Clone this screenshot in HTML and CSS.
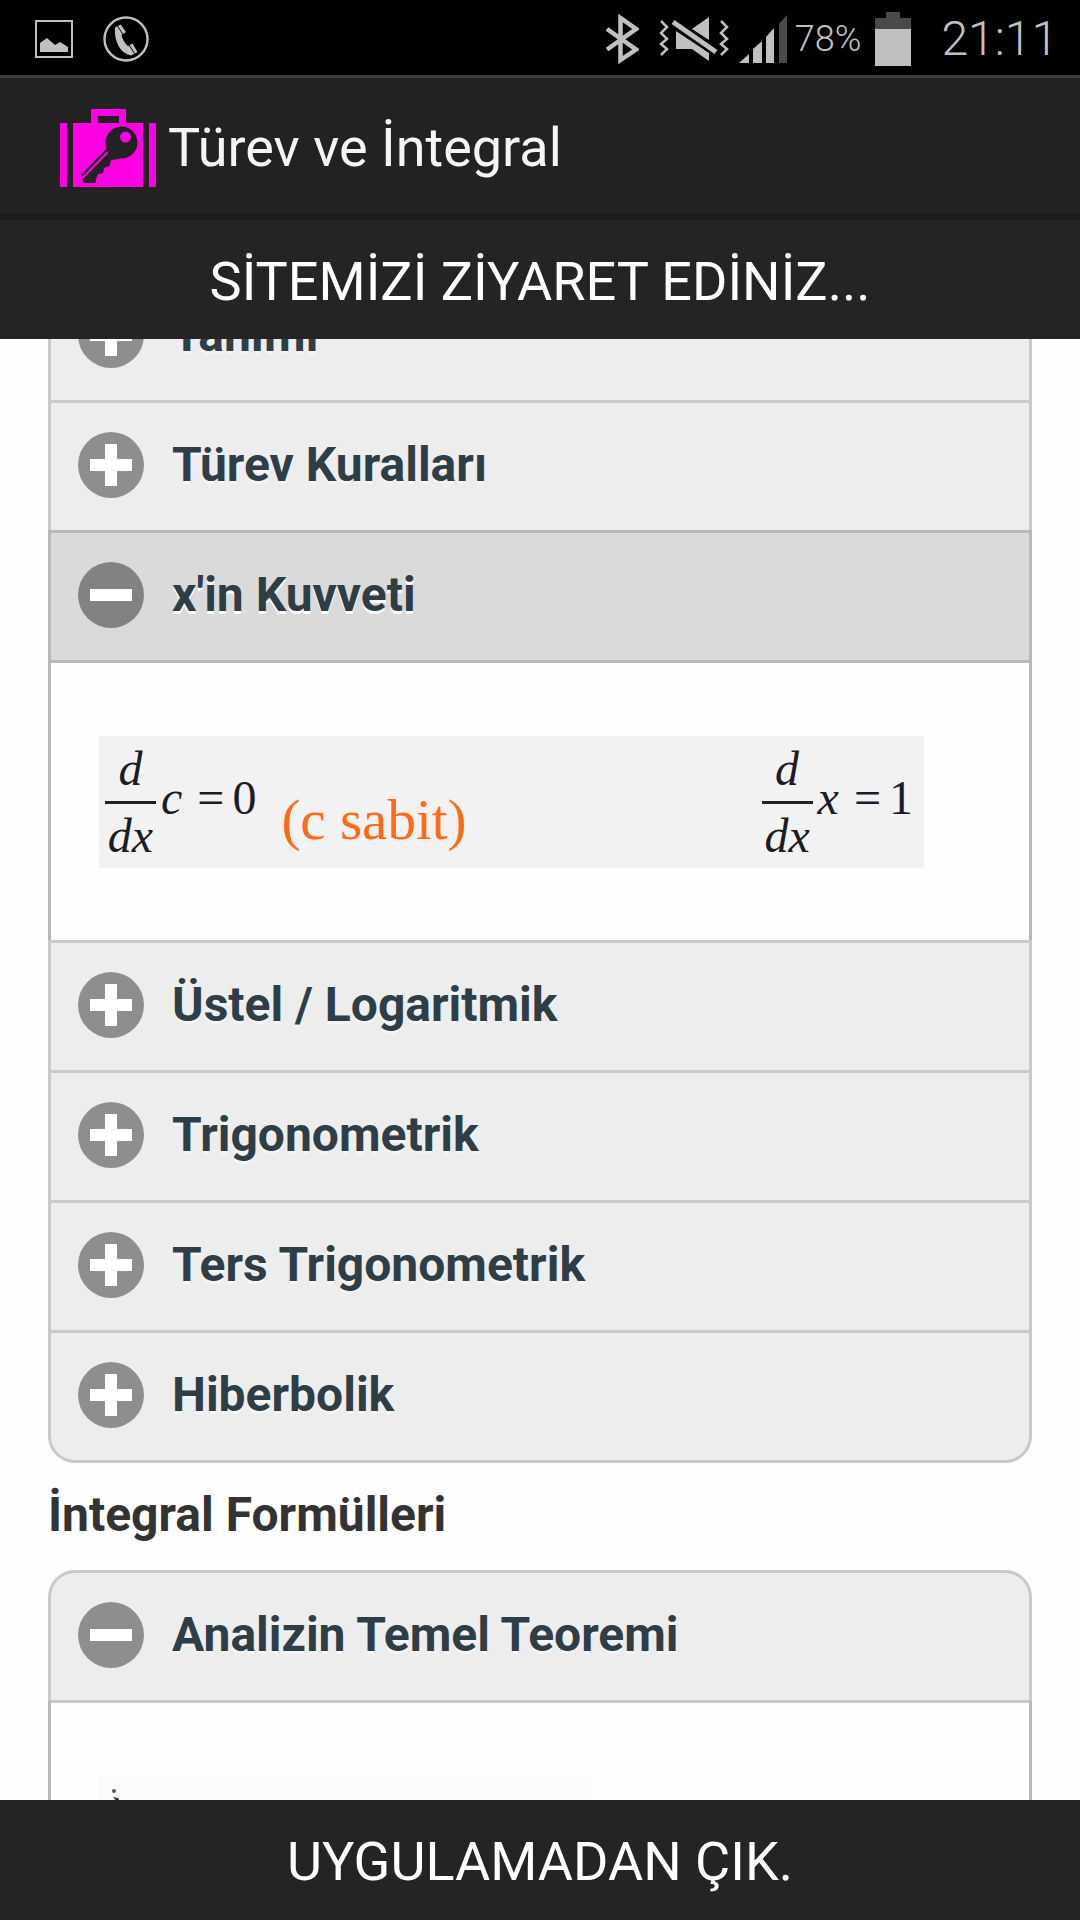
FILE: index.html
```html
<!DOCTYPE html>
<html lang="tr">
<head>
<meta charset="utf-8">
<meta name="viewport" content="width=device-width, initial-scale=1">
<title>Türev ve İntegral</title>
<link rel="stylesheet" href="styles.css">
</head>
<body>
<div class="app">
  <div class="status">
    <div class="status-left">
      <svg width="38" height="38" viewBox="0 0 38 38"><rect x="1" y="1" width="36" height="36" fill="none" stroke="#c0c0c0" stroke-width="2"/><path d="M5 32V23L12 18L20 25L25 22L33 27V32Z" fill="#c0c0c0"/></svg>
      <svg width="46" height="46" viewBox="0 0 46 46"><circle cx="23" cy="23" r="21.5" fill="none" stroke="#c0c0c0" stroke-width="2.4"/><path d="M12 11.500L17.500 8.500L23 16L18.500 19Q20 26 25 30L29.500 27.500L34.500 36L28 39.500Q20 38 15.500 30Q11 21 12 11.500Z" fill="#c0c0c0"/><path d="M14.500 10L20 18.500M26 29L31.500 37.500" stroke="#000" stroke-width="1"/></svg>
    </div>
    <div class="status-right">
      <svg class="bluetooth" width="34" height="50" viewBox="0 0 34 50"><path d="M2 15L31 35.500L15.500 46V4L31 15L2 35.500" fill="none" stroke="#c0c0c0" stroke-width="4.500"/></svg>
      <svg class="mute" width="70" height="46" viewBox="0 0 70 46"><g fill="#c0c0c0"><path d="M50 1V24L33 13Z"/><path d="M17 15L50 37V45L33 33H17Z"/></g><path d="M14 6L57 36" stroke="#000" stroke-width="9"/><path d="M14 6L57 36" stroke="#c0c0c0" stroke-width="5"/><path d="M2 5L8 11L2 17L8 23L2 28L8 33L2 39M62 5L68 11L62 17L68 23L62 28L68 33L62 39" fill="none" stroke="#c0c0c0" stroke-width="2.500"/></svg>
      <svg class="signal" width="48" height="48" viewBox="0 0 48 48"><g fill="#c0c0c0"><path d="M0 48L10 39V48Z"/><path d="M14 48V34L23 26V48Z"/><path d="M27 48V22L35 13V48Z"/></g><path d="M40 48V9L48 0V48Z" fill="#4a4a4a"/></svg>
      <span class="percent">78%</span>
      <svg class="battery" width="36" height="54" viewBox="0 0 36 54"><path d="M11 0H25V6H36V17H0V6H11Z" fill="#4a4a4a"/><path d="M0 17H36V54H0Z" fill="#c0c0c0"/></svg>
      <span class="time">21:11</span>
    </div>
  </div>

  <header class="titlebar">
    <svg width="96" height="78" viewBox="0 0 96 78"><path d="M0 14H7V78H0ZM89 14H96V78H89ZM13 14H31V0H66V14H83V78H13ZM38 7V14H59V7Z" fill="#ff00e4" fill-rule="evenodd"/><g fill="#222"><circle cx="61.500" cy="33.500" r="16"/><path d="M46 40L21 66L23 68L22.500 71L24 74H35.500L36 70L38 65L43 64L44 59L49.500 57L51 51L59 50L61 46Z"/></g><circle cx="65.500" cy="28" r="5.500" fill="#ff00e4"/><path d="M48 43L22.500 69" stroke="#ff00e4" stroke-width="2"/></svg>
    <h1 class="title">Türev ve İntegral</h1>
  </header>

  <a class="bar visit" href="#site">SİTEMİZİ ZİYARET EDİNİZ...</a>

  <main class="content">
    <div class="list list-scrolled">
      <h3 class="row"><button class="toggle" type="button"><span class="icon plus"></span>Tanımı</button></h3>
      <h3 class="row"><button class="toggle" type="button"><span class="icon plus"></span>Türev Kuralları</button></h3>
      <h3 class="row active"><button class="toggle" type="button" aria-expanded="true"><span class="icon"></span>x'in Kuvveti</button></h3>
      <div class="panel">
        <div class="formulas">
          <div class="equation">
            <span class="fraction"><i class="numerator">d</i><i>dx</i></span>
            <span class="term"><i>c</i><span class="equals">=</span><span>0</span></span>
            <span class="note">(c sabit)</span>
          </div>
          <div class="equation">
            <span class="fraction"><i class="numerator">d</i><i>dx</i></span>
            <span class="term"><i>x</i><span class="equals">=</span><span>1</span></span>
          </div>
        </div>
      </div>
      <h3 class="row"><button class="toggle" type="button"><span class="icon plus"></span>Üstel / Logaritmik</button></h3>
      <h3 class="row"><button class="toggle" type="button"><span class="icon plus"></span>Trigonometrik</button></h3>
      <h3 class="row"><button class="toggle" type="button"><span class="icon plus"></span>Ters Trigonometrik</button></h3>
      <h3 class="row last"><button class="toggle" type="button"><span class="icon plus"></span>Hiberbolik</button></h3>
    </div>

    <h2 class="section">İntegral Formülleri</h2>

    <div class="list">
      <h3 class="row first"><button class="toggle" type="button" aria-expanded="true"><span class="icon"></span>Analizin Temel Teoremi</button></h3>
      <div class="panel below-row">
        <div class="theorem">
          <svg width="30" height="132" viewBox="0 0 30 132"><circle cx="15" cy="15" r="2" fill="#556"/><path d="M14 21L19 22L23 28V34L20 28Z" fill="#334"/></svg>
        </div>
      </div>
    </div>
  </main>

  <button class="bar exit" type="button">UYGULAMADAN ÇIK.</button>
</div>
</body>
</html>
```
FILE: styles.css
```css
* {
  box-sizing: border-box;
}

body {
  margin: 0;
  background: #fefefe;
  font-family: Roboto, "Noto Sans", sans-serif;
}

svg {
  display: block;
  flex: none;
}

.app {
  display: flex;
  flex-direction: column;
  height: 100vh;
  overflow: hidden;
}

/* Status bar */
.status {
  display: flex;
  flex: none;
  justify-content: space-between;
  align-items: center;
  height: 78px;
  padding: 2px 22px 0 35px;
  border-bottom: 3px solid #3c3c3c;
  background: #000;
  color: #c0c0c0;
}

.status-left,
.status-right {
  display: flex;
  align-items: center;
}

.status-left {
  gap: 30px;
}

.mute {
  margin-left: 20px;
}

.signal {
  margin-left: 10px;
}

.percent {
  margin-left: 8px;
  font-size: 36px;
  font-weight: 300;
}

.battery {
  margin-left: 14px;
}

.time {
  margin-left: 30px;
  font-size: 48px;
  font-weight: 300;
}

/* Title bar */
.titlebar {
  display: flex;
  flex: none;
  align-items: center;
  gap: 12px;
  height: 142px;
  padding: 4px 60px 0;
  border-bottom: 7px solid #1c1c1c;
  background: #222;
}

.title {
  margin: 0;
  color: #f5f5f5;
  font-size: 54px;
  font-weight: 400;
  line-height: 64px;
}

.bar {
  display: flex;
  flex: none;
  justify-content: center;
  align-items: center;
  height: 120px;
  padding: 4px 0 0;
  border: 0;
  background: #262423;
  color: #fff;
  font-family: inherit;
  font-size: 54px;
  font-weight: 400;
  line-height: 64px;
  text-decoration: none;
}

.visit {
  height: 119px;
}

/* Accordion */
.content {
  flex: 1;
  min-height: 0;
  padding: 0 48px;
  overflow: hidden;
}

.list-scrolled {
  margin-top: -69px;
}

.row {
  height: 130px;
  margin: 0;
  border: 3px solid #c9c9c9;
  border-bottom: 0;
  background: #ededed;
  font-size: 48px;
}

.toggle {
  display: flex;
  align-items: center;
  gap: 28px;
  width: 100%;
  height: 100%;
  padding: 0 27px 4px;
  border: 0;
  background: none;
  color: #2f3e46;
  font: inherit;
  line-height: 56px;
  text-align: left;
  text-shadow: 0 3px 0 #f5f5f5;
}

.active {
  height: 133px;
  border: 3px solid #b8b8b8;
  background: #dadada;
}

.active .toggle {
  text-shadow: 0 3px 0 #fff;
}

.first {
  border-radius: 27px 27px 0 0;
}

.last {
  height: 133px;
  border-bottom: 3px solid #c9c9c9;
  border-radius: 0 0 27px 27px;
}

.icon {
  flex: none;
  width: 66px;
  height: 66px;
  border-radius: 50%;
  background: linear-gradient(#fff, #fff) center / 42px 12px no-repeat #8e8e8e;
}

.plus {
  background:
    linear-gradient(#fff, #fff) center / 42px 12px no-repeat,
    linear-gradient(#fff, #fff) center / 12px 42px no-repeat,
    #8e8e8e;
}

.active .icon {
  background-color: #828282;
}

.panel {
  padding: 73px 48px 72px;
  border: solid #b8b8b8;
  border-width: 0 3px;
}

.below-row {
  border-top: 3px solid #c9c9c9;
}

.section {
  margin: 24px 0 27px;
  color: #333;
  font-size: 48px;
  font-weight: 700;
  line-height: 56px;
}

/* Formulas */
.formulas {
  display: flex;
  justify-content: space-between;
  max-width: 825px;
  padding: 0 11px 0 6px;
  background: #f2f2f2;
  color: #1c1c24;
  font-family: "Liberation Serif", serif;
  font-size: 48px;
  line-height: 64px;
}

.equation {
  display: flex;
  align-items: center;
  gap: 5px;
  height: 132px;
}

.fraction {
  display: flex;
  flex-direction: column;
  width: 51px;
  text-align: center;
}

.numerator {
  border-bottom: 3px solid #222;
}

.term {
  display: flex;
  padding-bottom: 8px;
}

.equals {
  margin: 0 8px 0 15px;
}

.note {
  align-self: flex-end;
  padding: 0 0 16px 20px;
  color: #ff6a14;
  font-size: 57px;
}

.theorem {
  max-width: 494px;
  background: #fbfbfb;
}
```
